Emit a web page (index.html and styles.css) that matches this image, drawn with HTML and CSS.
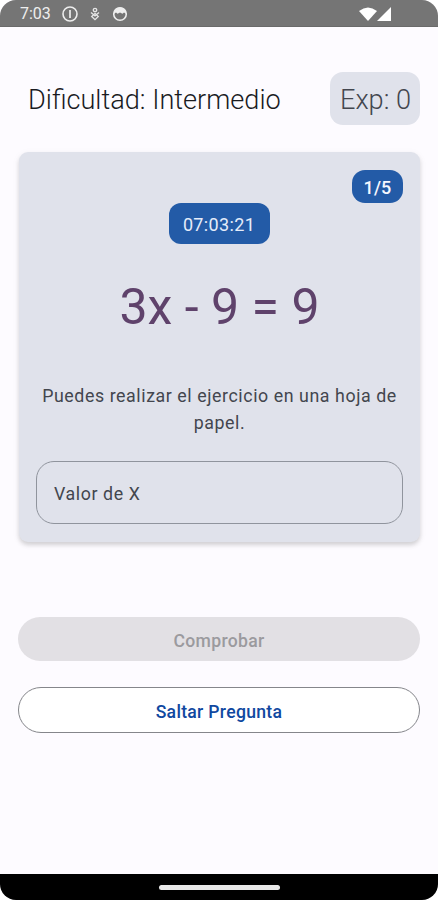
FILE: index.html
```html
<!DOCTYPE html>
<html lang="es">
<head>
<meta charset="utf-8">
<title>Ejercicio</title>
<link rel="stylesheet" href="styles.css">
</head>
<body>
<div class="phone">
  <header class="status">
    <span class="clock">7:03</span>
    <svg class="info" width="16" height="16" viewBox="0 0 16 16"><circle cx="8" cy="8" r="7" fill="none" stroke="#eee" stroke-width="1.6"/><path d="M8 4v8" stroke="#eee" stroke-width="1.7"/></svg>
    <svg class="debug" width="10" height="14" viewBox="0 0 10 14"><circle cx="5" cy="3" r="1.700" fill="none" stroke="#e6e6e6" stroke-width="1.300"/><path d="M1 5.500 5 9l4-3.500M5 6.500 1.700 9.500 5 12.700l3.300-3.200z" fill="none" stroke="#e6e6e6" stroke-width="1.300"/></svg>
    <svg class="face" width="16" height="16" viewBox="0 0 16 16"><circle cx="8" cy="8" r="6.300" fill="none" stroke="#eee" stroke-width="1.600"/><path d="M1.700 8C2 3.500 4.500 1.500 8 1.500s6 2 6.300 6.500L12 6.500l-1.500 1.300L8 6.500 5.500 7.800 4 6.500z" fill="#eee"/></svg>
    <span class="signals">
      <svg width="18" height="14" viewBox="0 0 18 14"><path d="M0 4Q9-3 18 4L9 14z" fill="#fff"/></svg>
      <svg width="14" height="14" viewBox="0 0 14 14"><path d="M14 0v14H0z" fill="#fff"/></svg>
    </span>
  </header>
  <main class="screen">
    <div class="heading">
      <h1 class="title">Dificultad: Intermedio</h1>
      <span class="exp">Exp: 0</span>
    </div>
    <section class="card">
      <span class="count">1/5</span>
      <span class="timer">07:03:21</span>
      <p class="equation">3x - 9 = 9</p>
      <p class="hint">Puedes realizar el ejercicio en una hoja de papel.</p>
      <div class="field">Valor de X</div>
    </section>
    <button class="button check" disabled>Comprobar</button>
    <button class="button skip">Saltar Pregunta</button>
  </main>
  <footer class="nav"><span class="handle"></span></footer>
</div>
</body>
</html>
```
FILE: styles.css
```css
* { box-sizing: border-box; }
body { margin: 0; background: #fff; font-family: Roboto, "Liberation Sans", sans-serif; }
h1, p { margin: 0; font-weight: 400; }
svg { display: block; }
.phone { width: 438px; height: 900px; display: flex; flex-direction: column; overflow: hidden; border-radius: 16px; background: #fdfbff; }
.status { height: 27px; flex: none; display: flex; align-items: center; padding: 1px 47px 0 20px; background: #757575; border-bottom: 1px solid #6a6a6a; color: #eee; }
.clock { width: 42px; font-size: 16px; line-height: 20px; padding-top: 1px; }
.debug { margin-left: 12px; }
.face { margin-left: 12px; }
.signals { display: flex; gap: 0; margin-left: auto; }
.screen { flex: 1; display: flex; flex-direction: column; padding: 45px 18px 0; }
.heading { display: flex; justify-content: space-between; align-items: center; height: 53px; padding-left: 10px; }
.title { padding-top: 3px; font-size: 27.15px; font-weight: 300; letter-spacing: 0; color: #1a1b1f; white-space: nowrap; }
.exp { width: 90px; height: 53px; padding-left: 1px; line-height: 57px; text-align: center; border-radius: 13px; background: #e0e2eb; color: #43464e; font-size: 27.15px; font-weight: 300; white-space: nowrap; }
.card { display: flex; flex-direction: column; align-items: center; height: 390px; margin: 27px 0 0 1px; padding: 18px 17px; border-radius: 9px; background: #e0e2eb; box-shadow: 0 3px 4px rgba(0,0,0,.14), 0 2px 9px rgba(0,0,0,.05); }
.count { align-self: flex-end; width: 51px; height: 33px; border-radius: 13px; background: #235ba7; color: #f4f7ff; font-size: 18px; font-weight: 500; line-height: 35px; letter-spacing: .2px; text-align: center; }
.timer { width: 101px; height: 41px; padding-right: 1px; border-radius: 12px; background: #235ba7; color: #e5ecfa; font-size: 18px; line-height: 43px; letter-spacing: .35px; text-align: center; }
.equation { margin-top: 32px; font-size: 50px; line-height: 62px; color: #5f426b; white-space: nowrap; }
.hint { margin-top: 44px; font-size: 17.8px; line-height: 27px; letter-spacing: .57px; color: #43464e; text-align: center; }
.field { width: 367px; height: 63px; flex: none; margin-top: 25px; padding-left: 17px; border: 1px solid #90949d; border-radius: 18px; color: #43464e; font-size: 17.8px; line-height: 63px; letter-spacing: .6px; }
.button { flex: none; width: 402px; height: 44px; padding: 3px 0 0; border: 0; border-radius: 23px; font-family: inherit; font-size: 17.6px; font-weight: 500; letter-spacing: .3px; text-align: center; }
.check { margin-top: 75px; background: #e2e0e4; color: #9b9a9e; }
.skip { height: 46px; margin-top: 26px; border: 1px solid #85868b; background: #fff; color: #1048a0; }
.nav { height: 26px; flex: none; display: flex; justify-content: center; align-items: center; background: #000; }
.handle { width: 121px; height: 5px; border-radius: 3px; background: #e8e8e8; }
```
